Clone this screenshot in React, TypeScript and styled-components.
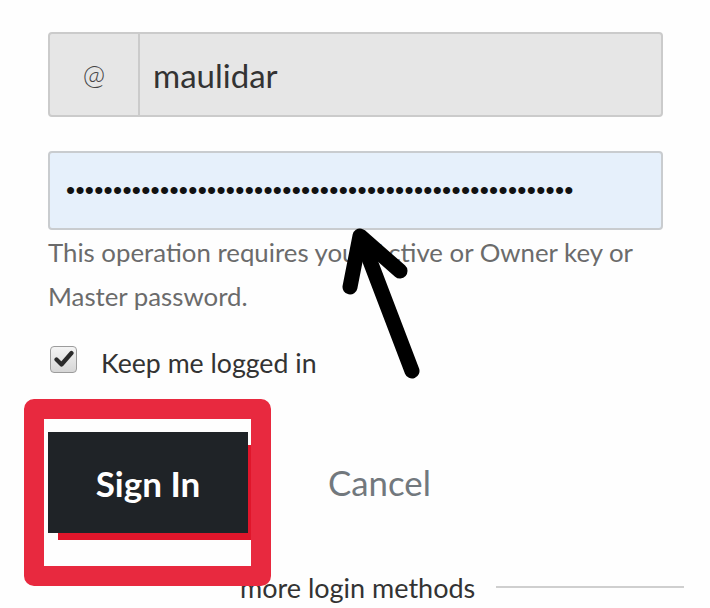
import styled, { createGlobalStyle } from "styled-components";

const GlobalStyle = createGlobalStyle`
  html, body {
    margin: 0;
    padding: 0;
    background: #fefefe;
    overflow: hidden;
  }
  body {
    font-family: Lato, "Open Sans", sans-serif;
    color: #333;
  }
`;

const Page = styled.div`
  position: relative;
  width: 710px;
  height: 608px;
  box-sizing: border-box;
  padding: 32px 47px 0 48px;
  display: flex;
  flex-direction: column;
`;

const InputGroup = styled.div`
  display: flex;
  height: 85px;
  box-sizing: border-box;
  border: 2px solid #cbcbcb;
  border-radius: 4px;
  background: #e6e6e6;
`;

const Addon = styled.div`
  width: 88px;
  display: flex;
  align-items: center;
  justify-content: center;
  border-right: 2px solid #cbcbcb;
  font-size: 27px;
  font-weight: 300;
  color: #444;
`;

const UserValue = styled.div`
  flex: 1;
  display: flex;
  align-items: center;
  padding-left: 13px;
  font-size: 33px;
  color: #333;
`;

const PasswordField = styled.div`
  margin-top: 34px;
  height: 79px;
  box-sizing: border-box;
  border: 2px solid #c9cccf;
  border-radius: 4px;
  background: #e6f0fb;
  display: flex;
  align-items: center;
  padding-left: 16px;
`;

const Dots = styled.span`
  font-family: "Liberation Sans", Arial, sans-serif;
  font-size: 26px;
  letter-spacing: 0.3px;
  color: #111;
`;

const HelpText = styled.p`
  margin: 0;
  font-size: 25.8px;
  line-height: 44px;
  color: #6b6b6b;
`;

const CheckRow = styled.label`
  margin-top: 25px;
  display: flex;
  align-items: center;
  height: 36px;
`;

const CheckBox = styled.span`
  width: 27px;
  height: 27px;
  margin-left: 2px;
  box-sizing: border-box;
  border: 1px solid #9c9c9c;
  border-radius: 4px;
  background: linear-gradient(#f4f4f4, #d6d6d6);
  display: flex;
  align-items: center;
  justify-content: center;
  margin-top: -4px;
`;

const CheckLabel = styled.span`
  margin-left: 24px;
  font-size: 26.7px;
  color: #333;
  padding-top: 4px;
`;

const ButtonRow = styled.div`
  margin-top: 53px;
  display: flex;
  align-items: center;
`;

const SignInButton = styled.button`
  width: 200px;
  height: 101px;
  border: none;
  border-radius: 0;
  background: #1f2327;
  color: #fff;
  font-family: Lato, "Open Sans", sans-serif;
  font-weight: 700;
  font-size: 35px;
  padding: 0;
  box-shadow: 7px 10px 0 -3px #e0162b;
  cursor: pointer;
`;

const CancelButton = styled.button`
  margin-left: 80px;
  border: none;
  background: none;
  padding: 0;
  color: #72787d;
  font-family: Lato, "Open Sans", sans-serif;
  font-size: 34.8px;
  cursor: pointer;
`;

const MoreRow = styled.div`
  margin-top: 39px;
  margin-right: -21px;
  display: flex;
  align-items: center;
  height: 30px;
`;

const MoreText = styled.span`
  margin-left: 192px;
  font-size: 27px;
  color: #333;
`;

const MoreLine = styled.span`
  flex: 1;
  margin-left: 21px;
  height: 2px;
  background: #cfcfcf;
`;

const RedMark = styled.div`
  position: absolute;
  left: 24px;
  top: 399px;
  width: 247px;
  height: 187px;
  box-sizing: border-box;
  border: 20px solid #e8293f;
  border-radius: 10px;
  pointer-events: none;
`;

const ArrowMark = styled.svg`
  position: absolute;
  left: 0;
  top: 0;
  pointer-events: none;
`;

export default function App() {
  return (
    <>
      <GlobalStyle />
      <Page>
        <InputGroup>
          <Addon>@</Addon>
          <UserValue>maulidar</UserValue>
        </InputGroup>
        <PasswordField>
          <Dots>{"•".repeat(54)}</Dots>
        </PasswordField>
        <HelpText>
          This operation requires your Active or Owner key or Master password.
        </HelpText>
        <CheckRow>
          <CheckBox>
            <svg width="20" height="18" viewBox="0 0 20 18">
              <path
                d="M2.5 9.5 L7.5 14.5 L17.5 3"
                fill="none"
                stroke="#2b2b2b"
                strokeWidth="4.2"
                strokeLinecap="round"
                strokeLinejoin="round"
              />
            </svg>
          </CheckBox>
          <CheckLabel>Keep me logged in</CheckLabel>
        </CheckRow>
        <ButtonRow>
          <SignInButton>Sign In</SignInButton>
          <CancelButton>Cancel</CancelButton>
        </ButtonRow>
        <MoreRow>
          <MoreText>more login methods</MoreText>
          <MoreLine />
        </MoreRow>
        <RedMark />
        <ArrowMark width="710" height="608" viewBox="0 0 710 608">
          <g
            fill="none"
            stroke="#000"
            strokeWidth="15"
            strokeLinecap="round"
            strokeLinejoin="round"
          >
            <path d="M412 371 L362 240" />
            <path d="M350 287 L360 236 L400 271" />
          </g>
        </ArrowMark>
      </Page>
    </>
  );
}
